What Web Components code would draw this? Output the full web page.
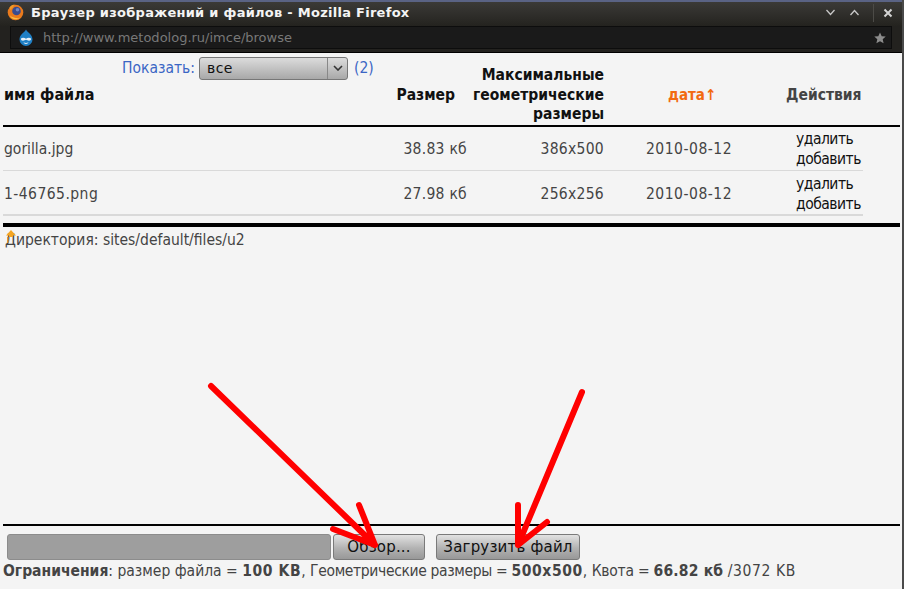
<!DOCTYPE html>
<html>
<head>
<meta charset="utf-8">
<title>Браузер изображений и файлов</title>
<style>
html, body { margin: 0; padding: 0; height: 100%; }
body { background: #f4f4f4; font-family: "DejaVu Sans", sans-serif; overflow: hidden; }
</style>
</head>
<body>
<browser-window>
  <file-browser></file-browser>
</browser-window>

<script>
const bodyFont = '"DejaVu Sans Condensed", "DejaVu Sans", sans-serif'

class BrowserWindow extends HTMLElement {
    constructor() {
        super()
        const shadow = this.attachShadow({mode: 'open'})
        shadow.innerHTML = `
<style>
:host { display: flex; flex-direction: column; width: 904px; height: 589px; position: relative; box-sizing: border-box; border-right: 2px solid #4a4a4a; }
.title { height: 26px; box-sizing: border-box; border-top: 2px solid #5a6384; background: linear-gradient(#3b3a37, #24231f); display: flex; align-items: center; padding: 0 0 3px 7px; color: #f4f4f4; font: bold 13px "DejaVu Sans", sans-serif; letter-spacing: .27px; }
.title .name { margin-left: 7px; flex: 1; white-space: nowrap; }
.title svg { display: block; }
.ctl { display: flex; align-items: center; gap: 9px; padding-right: 9px; }
.ctl .up { margin-left: 4px; margin-right: 4px; }
.sep { width: 1px; height: 18px; background: #4c4b47; }
.url { height: 27px; box-sizing: border-box; background: #23221f; border-bottom: 1px solid #000; padding: 0 10px 3px 10px; display: flex; }
.url .field { flex: 1; background: #1a1a1a; border: 1px solid #0d0d0d; display: flex; align-items: center; padding: 0 5px 0 7px; color: #787878; font: 13px "DejaVu Sans", sans-serif; gap: 9px; }
.url .field span { flex: 1; }
.body { flex: 1; min-height: 0; display: flex; flex-direction: column; }
</style>
<div class="title">
  <svg width="17" height="17" viewBox="0 0 17 17"><circle cx="8.500" cy="8.500" r="7.800" fill="#ea7a1c"/><circle cx="9.500" cy="7" r="4.300" fill="#3a4c8e"/><circle cx="10.500" cy="5.800" r="1.800" fill="#6f86c4"/><path d="M2.500 3.500C3.700 1.600 5.600.6 8 .5 6.800 1.300 6.200 2.200 6.300 3.200 4.700 3.700 4 5 4.200 6.300 3.300 5.700 2.700 4.700 2.500 3.500z" fill="#f09a28"/><path d="M2.500 11c1 2.700 3.500 4.300 6.300 4.300 1.800 0 3.400-.6 4.600-1.800-1.300.6-2.900.8-4.600.5C6.300 13.600 4 12.700 2.500 11z" fill="#f8bf45"/></svg>
  <span class="name">Браузер изображений и файлов - Mozilla Firefox</span>
  <div class="ctl">
    <svg width="11" height="7" viewBox="0 0 11 7"><path d="M1.500 1l4 4.500 4-4.500" fill="none" stroke="#c8c8c8" stroke-width="1.300"/></svg>
    <svg class="up" width="11" height="7" viewBox="0 0 11 7"><path d="M1.500 6l4-4.500 4 4.500" fill="none" stroke="#c8c8c8" stroke-width="1.300"/></svg>
    <span class="sep"></span>
    <svg width="10" height="10" viewBox="0 0 10 10"><path d="M1.500 1.500l7 7M8.500 1.500l-7 7" fill="none" stroke="#d4d4d4" stroke-width="2"/></svg>
  </div>
</div>
<div class="url">
  <div class="field">
    <svg width="16" height="17" viewBox="0 0 16 17"><path d="M8 .5c1 2.700 6.500 4.800 6.500 10a6.500 6.500 0 0 1-13 0C1.500 5.300 7 3.200 8 .5z" fill="#1f7fc4"/><path d="M3 9.500c1.300-1.300 3.500-1 5 .3 1.500-1.300 3.700-1.600 5-.3.300 1.300-.7 2.300-2 2.300-1.200 0-2-1-3-1s-1.800 1-3 1c-1.300 0-2.300-1-2-2.300z" fill="#e8f0f6"/><path d="M5.500 13.300c1.500.8 3.500.8 5 0-.5 1.200-1.400 1.700-2.500 1.700s-2-.5-2.500-1.700z" fill="#e8f0f6"/></svg>
    <span>http://www.metodolog.ru/imce/browse</span>
    <svg width="12" height="12" viewBox="0 0 12 12"><path d="M6 .5l1.700 3.700 4 .4-3 2.700.9 4L6 9.200 2.400 11.300l.9-4-3-2.700 4-.4z" fill="#8c8c8c"/></svg>
  </div>
</div>
<div class="body"><slot></slot></div>
`
    }
}

class ImceButton extends HTMLElement {
    constructor() {
        super()
        const shadow = this.attachShadow({mode: 'open'})
        shadow.innerHTML = `
<style>
:host { display: inline-flex; align-items: center; justify-content: center; box-sizing: border-box; height: 26px; border: 1px solid #7a7a7a; border-radius: 3px; background: linear-gradient(#e2e2e2, #b2b2b2 55%, #989898); color: #111; font: 15px "DejaVu Sans", sans-serif; letter-spacing: .2px; white-space: nowrap; }
</style>
<slot></slot>
`
    }
}

class FileRow extends HTMLElement {
    constructor() {
        super()
        const shadow = this.attachShadow({mode: 'open'})
        shadow.innerHTML = `
<style>
:host { display: grid; grid-template-columns: 393px 71px 137px 128px 1fr; width: 860px; height: 44px; box-sizing: border-box; margin-left: 3px; border-bottom: 1px solid #d9d9d9; color: #444; font: 15.5px ${bodyFont}; align-items: center; }
.name { padding-left: 1px; letter-spacing: var(--name-track, 0); }
.size, .dim { text-align: right; letter-spacing: .28px; }
.date { padding-left: 42px; white-space: nowrap; letter-spacing: .5px; }
.ops { color: #111; line-height: 20px; padding-left: 64px; margin-top: 1px; white-space: nowrap; letter-spacing: -.5px; }
:host([last]) { border-bottom-width: 2px; height: 45px; padding-top: 2px; }
</style>
<div class="name"></div><div class="size"></div><div class="dim"></div><div class="date"></div>
<div class="ops">удалить<br>добавить</div>
`
    }

    connectedCallback() {
        const cells = this.shadowRoot.querySelectorAll('div')
        cells[0].textContent = this.getAttribute('name')
        cells[1].textContent = this.getAttribute('size')
        cells[2].textContent = this.getAttribute('dim')
        cells[3].textContent = this.getAttribute('date')
    }
}

class FileBrowser extends HTMLElement {
    constructor() {
        super()
        const shadow = this.attachShadow({mode: 'open'})
        shadow.innerHTML = `
<style>
:host { display: flex; flex-direction: column; height: 100%; font: 15.5px ${bodyFont}; color: #444; }
.head { display: grid; grid-template-columns: 393px 71px 137px 128px 1fr; grid-template-rows: 30px 42px; margin-left: 3px; width: 897px; height: 72px; box-sizing: border-box; color: #111; font-weight: bold; font-size: 15.5px; }
.show { grid-column: 1 / 6; display: flex; align-items: center; padding-left: 119px; font-weight: normal; font-size: 15.5px; color: #3b66c4; }
.show .sel { margin-left: 4px; width: 149px; height: 23px; box-sizing: border-box; border: 1px solid #777; border-radius: 3px; background: linear-gradient(#dcdcdc, #a8a8a8); display: flex; align-items: center; justify-content: space-between; padding-left: 7px; color: #111; font: 14px "DejaVu Sans", sans-serif; letter-spacing: .4px; }
.show .arrow { width: 19px; height: 21px; display: flex; align-items: center; justify-content: center; border-left: 1px solid #888; }
.show .count { margin-left: 6px; }
.h { align-self: start; margin-top: 3px; }
.h.name { padding-left: 1px; margin-top: 2px; font-size: 16px; }
.h.size { text-align: right; padding-right: 12px; }
.h.dim { margin-top: -17px; text-align: right; line-height: 19.5px; }
.h.date { color: #f26a10; padding-left: 64px; white-space: nowrap; font-size: 15px; }
.h.act { color: #444; padding-left: 54px; }
.rule { height: 2px; background: #000; width: 897px; margin-left: 3px; flex: none; }
.thick { height: 4px; width: 897px; margin-left: 3px; background: #000; margin-top: 7px; flex: none; }
.dir { position: relative; margin-left: 5px; line-height: 20px; padding-top: 3px; }
.dir svg { position: absolute; left: 0; top: 3px; }
.spacer { flex: 1; }
.upload { display: flex; align-items: center; padding: 8px 0 0 7px; gap: 2px; }
.file { width: 324px; height: 26px; box-sizing: border-box; border: 1px solid #8c8c8c; border-radius: 3px; background: #9e9e9e; }
.browse { width: 92px; }
.send { width: 144px; margin-left: 9px; }
.limits { padding: 2px 0 9px 3px; white-space: nowrap; line-height: 18px; }
.limits b { color: #444; }
.limits .n { letter-spacing: .6px; }
.limits .q { letter-spacing: .2px; }
.limits .t { letter-spacing: -.35px; }
.limits .k { letter-spacing: -.25px; }
.arrows { position: absolute; left: 0; top: 0; pointer-events: none; }
</style>
<div class="head">
  <div class="show">Показать:<div class="sel">все<span class="arrow"><svg width="10" height="6" viewBox="0 0 10 6"><path d="M1 1l4 4 4-4" fill="none" stroke="#333" stroke-width="1.600"/></svg></span></div><span class="count">(2)</span></div>
  <div class="h name">имя файла</div>
  <div class="h size">Размер</div>
  <div class="h dim">Максимальные геометрические размеры</div>
  <div class="h date">дата↑</div>
  <div class="h act">Действия</div>
</div>
<div class="rule"></div>
<file-row name="gorilla.jpg" size="38.83 кб" dim="386x500" date="2010-08-12"></file-row>
<file-row last style="--name-track:.45px" name="1-46765.png" size="27.98 кб" dim="256x256" date="2010-08-12"></file-row>
<div class="thick"></div>
<div class="dir"><svg width="12" height="14" viewBox="0 0 12 14"><path d="M6 0L11 5.500H8V7H4V5.500H1z" fill="#f5a623"/><rect x="2" y="7" width="1.500" height="6" fill="#e8952a"/></svg>Директория: sites/default/files/u2</div>
<div class="spacer"></div>
<div class="rule"></div>
<div class="upload">
  <div class="file"></div>
  <imce-button class="browse">Обзор...</imce-button>
  <imce-button class="send">Загрузить файл</imce-button>
</div>
<div class="limits"><b>Ограничения</b>: размер файла = <b class="n">100 KB</b>, <span class="t">Геометрические размеры = </span><b class="n">500x500</b>, <span class="k">Квота = </span><b class="q">66.82 кб</b> <span class="n">/3072 KB</span></div>
<svg class="arrows" width="904" height="589" viewBox="0 0 904 589" fill="none" stroke="#ff0000" stroke-width="6" stroke-linecap="round" stroke-linejoin="round">
  <path d="M211 386L375 545M359 505L375 545M333 529L375 545"/>
  <path d="M582 392L518 545M518 505L518 545M547 522L518 545"/>
</svg>
`
    }
}

customElements.define('browser-window', BrowserWindow)
customElements.define('imce-button', ImceButton)
customElements.define('file-row', FileRow)
customElements.define('file-browser', FileBrowser)
</script>
</body>
</html>
